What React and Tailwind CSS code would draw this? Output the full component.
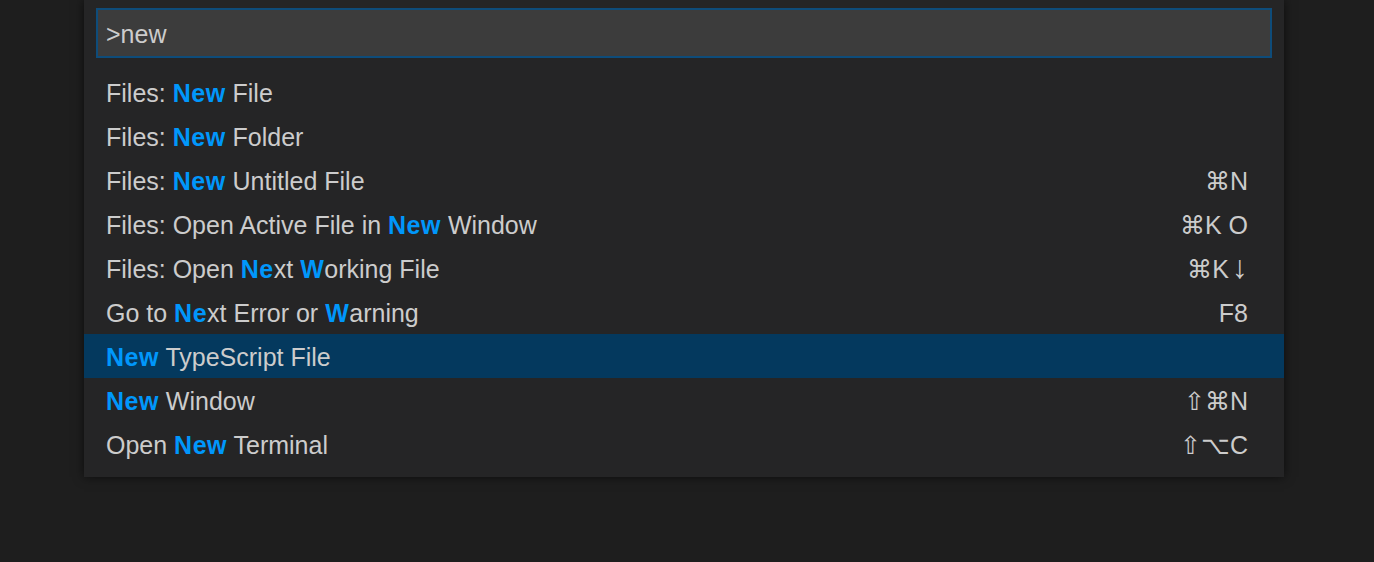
import React from 'react';

// each label is split into [text, highlighted] pieces
const items = [
    { parts: [['Files: ', false], ['New', true], [' File', false]] },
    { parts: [['Files: ', false], ['New', true], [' Folder', false]] },
    { parts: [['Files: ', false], ['New', true], [' Untitled File', false]], keys: '⌘N' },
    { parts: [['Files: Open Active File in ', false], ['New', true], [' Window', false]], keys: '⌘K O' },
    { parts: [['Files: Open ', false], ['Ne', true], ['xt ', false], ['W', true], ['orking File', false]], keys: <>⌘K<span className="ml-[3px] text-[32px] leading-none">↓</span></> },
    { parts: [['Go to ', false], ['Ne', true], ['xt Error or ', false], ['W', true], ['arning', false]], keys: 'F8' },
    { parts: [['New', true], [' TypeScript File', false]], selected: true },
    { parts: [['New', true], [' Window', false]], keys: '⇧⌘N' },
    { parts: [['Open ', false], ['New', true], [' Terminal', false]], keys: '⇧⌥C' },
];

const App = () => {
    return (
        <div className="w-[1374px] h-[562px] bg-[#1e1e1e] overflow-hidden" style={{ fontFamily: '"Liberation Sans", Arial, sans-serif' }}>
            <div className="ml-[84px] w-[1200px] bg-[#252526] pt-2 pb-[11px] shadow-[0_0_10px_rgba(0,0,0,0.6)]">
                <div className="mx-3 h-[50px] bg-[#3c3c3c] border-2 border-[#0e4c7a] flex items-center px-2 pt-1 text-[25px] text-[#cccccc]">
                    &gt;new
                </div>
                <div className="mt-[12px]">
                    {items.map((item, i) => (
                        <div
                            key={i}
                            className={`h-[44px] flex items-center justify-between pl-[22px] pr-[36px] pt-[4px] text-[25px] ${item.selected ? 'bg-[#04395e]' : ''}`}
                        >
                            <span className="text-[#cccccc] whitespace-pre">
                                {item.parts.map(([t, hl], j) => (
                                    <span key={j} className={hl ? 'text-[#0097fb] font-bold tracking-[0.5px]' : ''}>{t}</span>
                                ))}
                            </span>
                            {item.keys && <span className="text-[#cccccc]">{item.keys}</span>}
                        </div>
                    ))}
                </div>
            </div>
        </div>
    );
};

export default App;
